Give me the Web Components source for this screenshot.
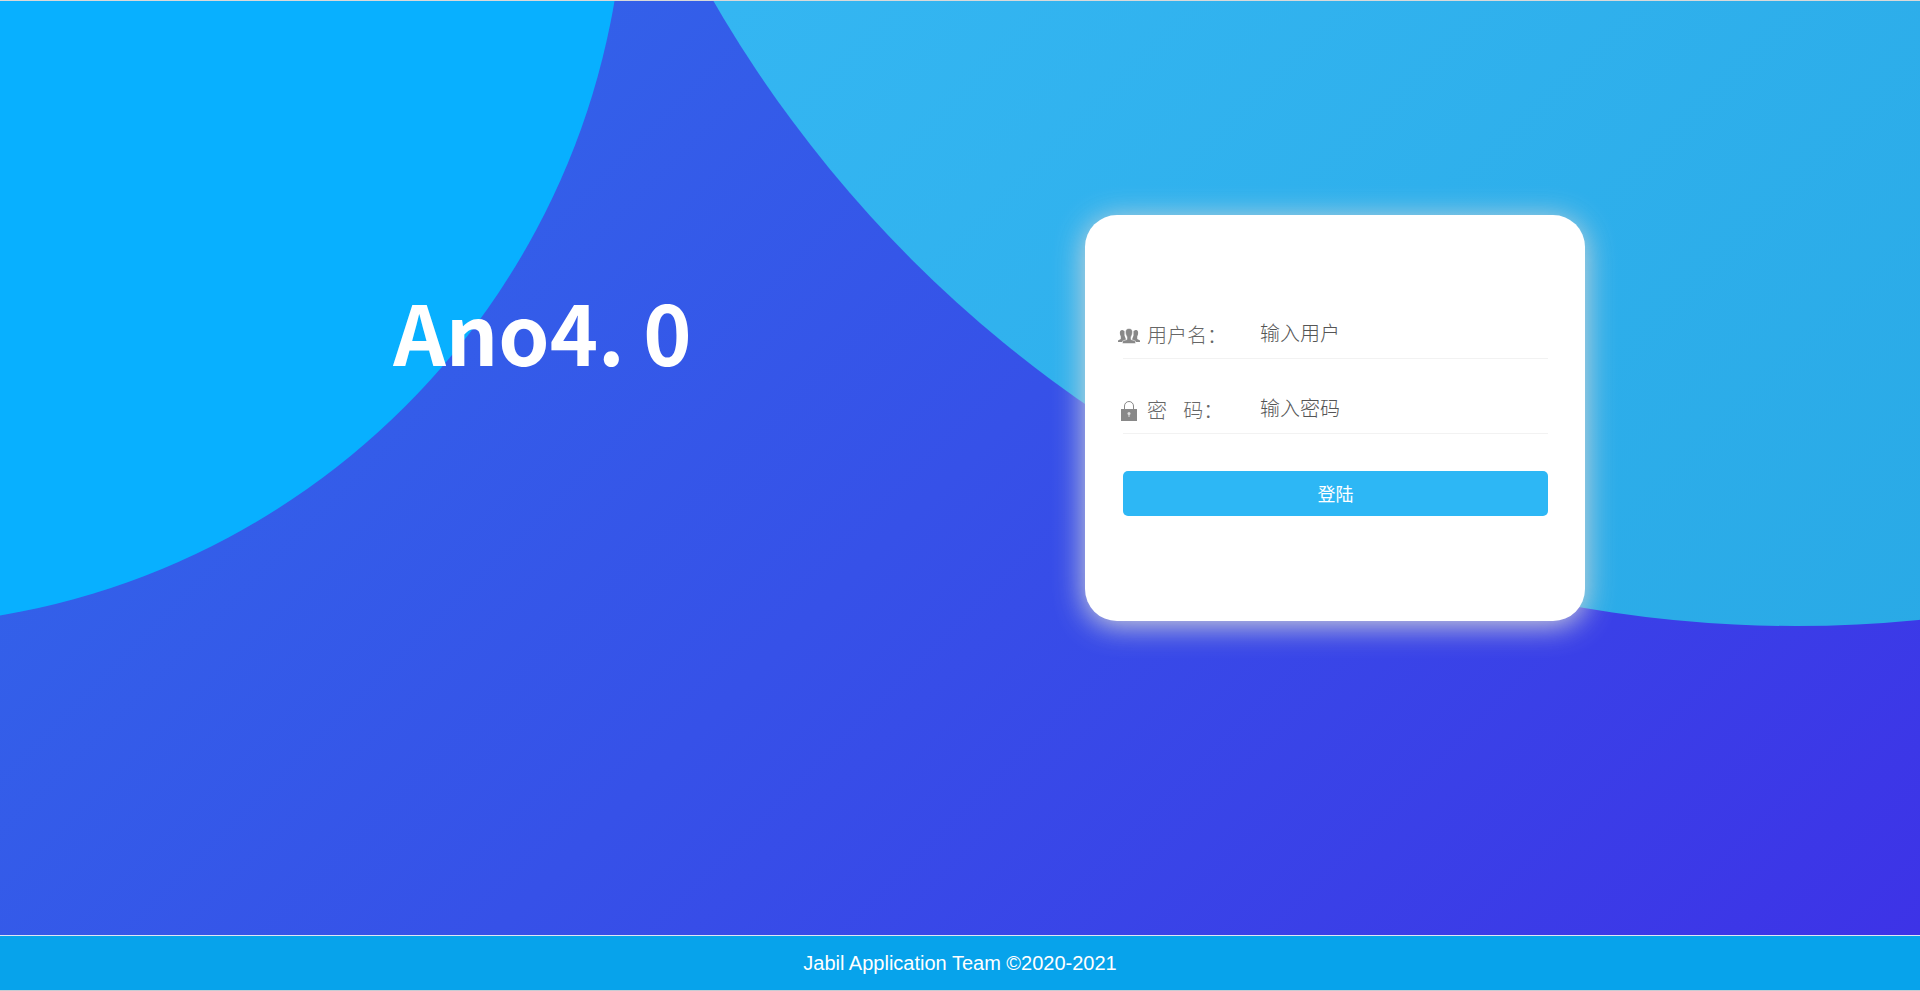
<!DOCTYPE html>
<html lang="zh-CN">
<head>
<meta charset="utf-8">
<title>Ano4.0</title>
<style>
html, body { height: 100%; margin: 0; }
body { font-family: "Liberation Sans", "Noto Sans CJK SC", sans-serif; }
</style>
</head>
<body>
<login-page>
  <app-title>Ano4. 0</app-title>
  <login-card></login-card>
  <page-footer slot="footer">Jabil Application Team ©2020-2021</page-footer>
</login-page>
<script>
class BaseElement extends HTMLElement {
  constructor() {
    super();
    this.attachShadow({ mode: 'open' }).innerHTML = this.constructor.markup;
  }
}

class LoginPage extends BaseElement {
  static markup = `
    <style>
      :host { display: flex; flex-direction: column; min-height: 100%; box-sizing: border-box; border-top: 1px solid #d9d9d9; border-bottom: 1px solid #c8ccd2; }
      main { position: relative; flex: 1; overflow: hidden; display: grid; grid-template-columns: 1085fr 835fr; align-items: start; background: linear-gradient(135deg, #316bea 0%, #3651e8 50%, #3d33e7 100%); }
      .disc { position: absolute; border-radius: 50%; }
      .left { width: 1500px; height: 1500px; left: -875px; top: -875px; background: #08b0ff; }
      .right { width: 2500px; height: 2500px; left: 546px; top: -1875px; background: linear-gradient(135deg, #40c4ff 0%, #23a2df 100%); }
      ::slotted(*) { position: relative; }
    </style>
    <main>
      <div class="disc left"></div>
      <div class="disc right"></div>
      <slot></slot>
    </main>
    <slot name="footer"></slot>`;
}

class AppTitle extends BaseElement {
  static markup = `
    <style>
      :host { display: block; margin-top: 280px; text-align: center; color: #fff; }
      h1 { margin: 0; font: 700 82px/100px "Noto Sans CJK SC", sans-serif; }
    </style>
    <h1><slot></slot></h1>`;
}

class LoginCard extends BaseElement {
  static markup = `
    <style>
      :host { display: block; box-sizing: border-box; width: 500px; margin-top: 214px; padding: 69px 37px 105px 38px; border-radius: 32px; background: #fff; box-shadow: 0 4px 30px #d8d8d8; }
      button { display: block; width: 100%; height: 45px; margin-top: 37px; padding: 0; border: 0; border-radius: 5px; background: #2db7f5; color: #fff; font: 18px/45px "Noto Sans CJK SC", sans-serif; }
    </style>
    <form>
      <login-field label="用户名：" name="user" type="text" hint="输入用户">
        <svg slot="icon" width="22" height="24" viewBox="0 0 22 24" fill="#888"><path d="M4.500 6C2 6 1.500 8 2 10.500l.8 2V15L0 16.500V18h5l3-2.500-1.500-4V7zM17.500 6c2.500 0 3 2 2.500 4.500l-.8 2V15l2.800 1.500V18h-5l-3-2.500 1.500-4V7z"/><path d="M11 4.500C7.500 4.500 7 7.500 8 11l1 2v2.500L4.500 17v2.500h13V17L13 15.500V13l1-2c1-3.500.5-6.500-3-6.500z" stroke="#fff" stroke-width=".5"/></svg>
      </login-field>
      <login-field label="密&emsp14;&ensp;&hairsp;码：" name="password" type="password" hint="输入密码">
        <svg slot="icon" width="22" height="24" viewBox="0 0 22 24"><path d="M6.500 10V7a4.500 4.500 0 0 1 9 0v3" fill="none" stroke="#888"/><path d="M3 10h16v12H3z" fill="#888"/><circle cx="11" cy="14.500" r="1.500" fill="#ddd"/><path d="M10.500 15h1v3h-1z" fill="#ddd"/></svg>
      </login-field>
      <button type="button">登陆</button>
    </form>`;
}

class LoginField extends BaseElement {
  static markup = `
    <style>
      :host { display: block; height: 75px; box-sizing: border-box; padding-top: 34px; border-bottom: 1px solid #f2f2f2; }
      .row { display: grid; grid-template-columns: 20px 117px 1fr; align-items: start; }
      ::slotted(svg) { display: block; margin: 6px 0 0 -5px; }
      label { padding-left: 4px; white-space: pre; color: #666; font: 300 20px/34px "Noto Sans CJK SC", sans-serif; }
      input { min-width: 0; height: 30px; padding: 0; border: 0; outline: 0; background: none; color: #555; font: 300 20px/30px "Noto Sans CJK SC", sans-serif; }
      input::placeholder { color: #555; opacity: 1; }
    </style>
    <div class="row"><slot name="icon"></slot><label for="field"></label><input id="field"></div>`;
  connectedCallback() {
    const input = this.shadowRoot.querySelector('input');
    this.shadowRoot.querySelector('label').textContent = this.getAttribute('label');
    input.type = this.getAttribute('type');
    input.name = this.getAttribute('name');
    input.placeholder = this.getAttribute('hint');
  }
}

class PageFooter extends BaseElement {
  static markup = `
    <style>
      :host { display: block; border-top: 1px solid #e0e6f2; background: #07a3eb; color: #fff; text-align: center; }
      footer { padding-top: 1px; font: 20px/53px "Liberation Sans", Arial, sans-serif; }
    </style>
    <footer><slot></slot></footer>`;
}

customElements.define('login-page', LoginPage);
customElements.define('app-title', AppTitle);
customElements.define('login-field', LoginField);
customElements.define('login-card', LoginCard);
customElements.define('page-footer', PageFooter);
</script>
</body>
</html>
